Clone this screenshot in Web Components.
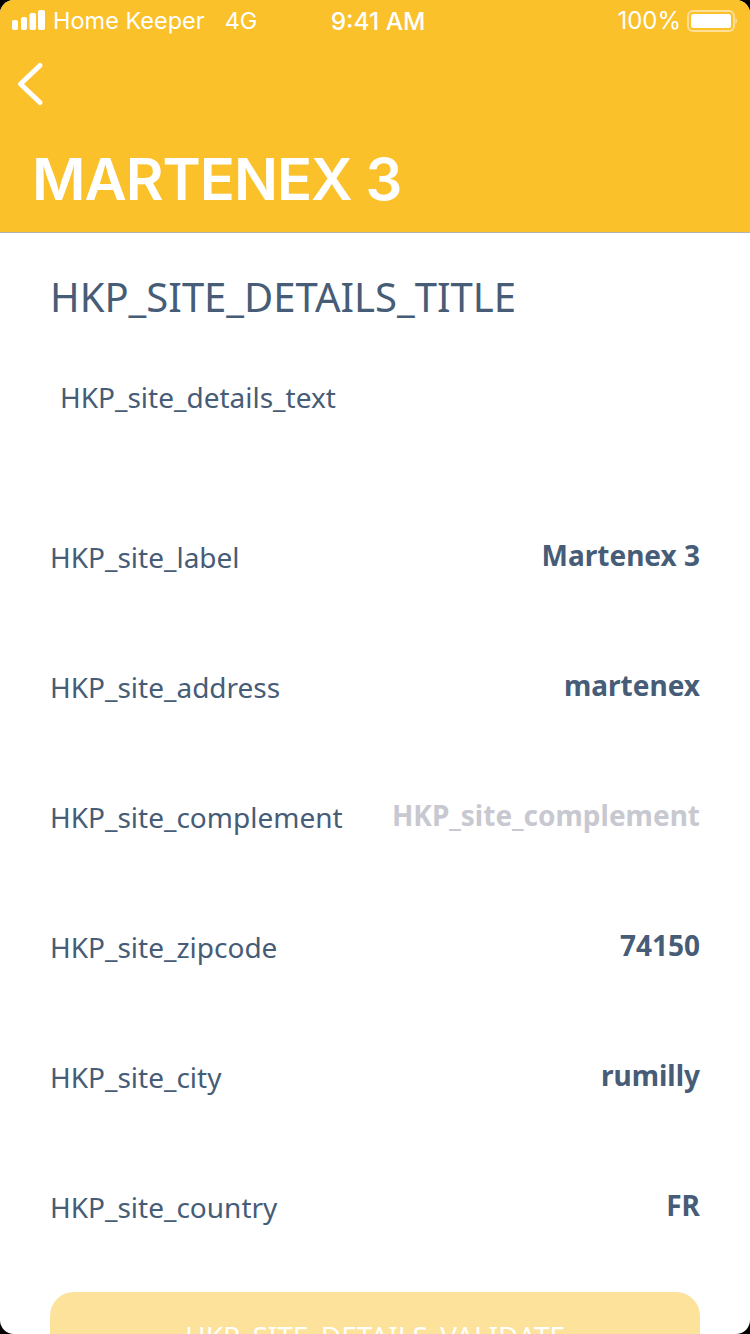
<!DOCTYPE html>
<html>
<head>
<meta charset="utf-8">
<title>Martenex 3</title>
<style>
    html, body { margin: 0; padding: 0; background: #000; }
</style>
</head>
<body>
<site-details-page>
    <app-header slot="header" title-text="MARTENEX 3"></app-header>
    <h-title>HKP_SITE_DETAILS_TITLE</h-title>
    <h-intro>HKP_site_details_text</h-intro>
    <site-row label="HKP_site_label">Martenex 3</site-row>
    <site-row label="HKP_site_address">martenex</site-row>
    <site-row label="HKP_site_complement" empty>HKP_site_complement</site-row>
    <site-row label="HKP_site_zipcode">74150</site-row>
    <site-row label="HKP_site_city">rumilly</site-row>
    <site-row label="HKP_site_country">FR</site-row>
    <validate-button>HKP_SITE_DETAILS_VALIDATE</validate-button>
</site-details-page>

<script>
class SiteDetailsPage extends HTMLElement {
    constructor() {
        super()
        this.shadow = this.attachShadow({ mode: 'open' })
    }
    connectedCallback() {
        this.shadow.innerHTML = `
        <style>
            :host {
                display: block;
                width: 750px;
                height: 1334px;
                overflow: hidden;
                border-radius: 14px;
                background: #fff;
                font-family: "Noto Sans", sans-serif;
                color: #465c77;
            }
            .content {
                display: flex;
                flex-direction: column;
                padding: 0 50px;
            }
        </style>
        <slot name="header"></slot>
        <div class="content"><slot></slot></div>
        `
    }
}

class AppHeader extends HTMLElement {
    constructor() {
        super()
        this.shadow = this.attachShadow({ mode: 'open' })
    }
    connectedCallback() {
        this.shadow.innerHTML = `
        <style>
            :host {
                display: block;
                height: 232px;
                background: #fac12b;
                border-bottom: 1px solid #b2b2b2;
                color: #fff;
                font-family: Inter, sans-serif;
            }
            .status {
                display: grid;
                grid-template-columns: 1fr auto 1fr;
                align-items: center;
                height: 41px;
                padding: 0 13px 0 12px;
                font-size: 24px;
            }
            .left, .right { display: flex; align-items: center; }
            .right { justify-content: flex-end; }
            .signal { margin-top: -1px; }
            .carrier { margin-left: 7px; font-size: 23.500px; }
            .network { margin-left: 20px; font-size: 23.500px; }
            .clock { font-weight: 500; font-size: 24.500px; padding-left: 7px; }
            .batt { margin-left: 6px; }
            .back { display: block; margin: 19px 0 0 16px; }
            h1 {
                margin: 36px 0 0 32px;
                font-size: 58px;
                line-height: 70px;
                font-weight: 600;
                letter-spacing: -1px;
            }
        </style>
        <div class="status">
            <div class="left">
                <svg class="signal" width="34" height="20" viewBox="0 0 34 20">
                    <rect x="0" y="10" width="6" height="10" rx="2" fill="#fff"/>
                    <rect x="9" y="7" width="6" height="13" rx="2" fill="#fff"/>
                    <rect x="17.500" y="3" width="6.500" height="17" rx="2" fill="#fff"/>
                    <rect x="26" y="0" width="7" height="20" rx="2" fill="#fff"/>
                </svg>
                <span class="carrier">Home Keeper</span>
                <span class="network">4G</span>
            </div>
            <div class="clock">9:41 AM</div>
            <div class="right">
                <span>100%</span>
                <svg class="batt" width="50" height="22" viewBox="0 0 50 22">
                    <rect x="1" y="1" width="46" height="20" rx="5" fill="none" stroke="#fff" stroke-opacity=".5" stroke-width="2"/>
                    <rect x="4" y="4" width="40" height="14" rx="2.500" fill="#fff"/>
                    <path d="M48.500 8c.9.4 1.500 1.600 1.500 3s-.6 2.600-1.500 3z" fill="#fff" fill-opacity=".5"/>
                </svg>
            </div>
        </div>
        <svg class="back" width="30" height="48" viewBox="0 0 30 48">
            <path d="M24 5.500 4.500 24 24 42.500" fill="none" stroke="#fff" stroke-width="5" stroke-linecap="round" stroke-linejoin="round"/>
        </svg>
        <h1>${this.getAttribute('title-text')}</h1>
        `
    }
}

class HTitle extends HTMLElement {
    constructor() {
        super()
        this.shadow = this.attachShadow({ mode: 'open' })
        this.shadow.innerHTML = `
        <style>
            :host {
                display: block;
                margin-top: 38px;
                font-size: 40px;
                line-height: 52px;
            }
        </style>
        <slot></slot>
        `
    }
}

class HIntro extends HTMLElement {
    constructor() {
        super()
        this.shadow = this.attachShadow({ mode: 'open' })
        this.shadow.innerHTML = `
        <style>
            :host {
                display: block;
                margin: 54px 0 120px 10px;
                font-size: 28px;
                line-height: 40px;
            }
        </style>
        <slot></slot>
        `
    }
}

class SiteRow extends HTMLElement {
    constructor() {
        super()
        this.shadow = this.attachShadow({ mode: 'open' })
    }
    connectedCallback() {
        this.shadow.innerHTML = `
        <style>
            :host {
                display: flex;
                justify-content: space-between;
                height: 130px;
                font-size: 28px;
                line-height: 40px;
                white-space: nowrap;
            }
            .value { font-weight: 700; margin-top: -2px; }
            :host([empty]) .value { color: #c8c8d0; }
        </style>
        <span>${this.getAttribute('label')}</span>
        <span class="value"><slot></slot></span>
        `
    }
}

class ValidateButton extends HTMLElement {
    constructor() {
        super()
        this.shadow = this.attachShadow({ mode: 'open' })
        this.shadow.innerHTML = `
        <style>
            :host {
                display: flex;
                justify-content: center;
                align-items: center;
                height: 88px;
                margin-top: -25px;
                border-radius: 24px;
                background: #fde29b;
                color: #fff;
                font-size: 28px;
                line-height: 40px;
            }
        </style>
        <slot></slot>
        `
    }
}

customElements.define('site-details-page', SiteDetailsPage);
customElements.define('app-header', AppHeader);
customElements.define('h-title', HTitle);
customElements.define('h-intro', HIntro);
customElements.define('site-row', SiteRow);
customElements.define('validate-button', ValidateButton);
</script>
</body>
</html>
